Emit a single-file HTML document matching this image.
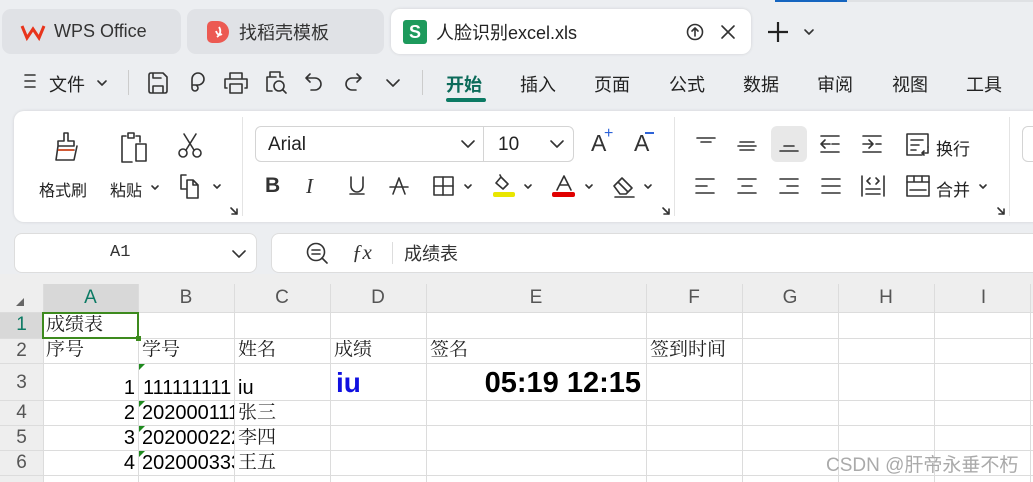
<!DOCTYPE html>
<html><head><meta charset="utf-8">
<style>
*{margin:0;padding:0;box-sizing:border-box}
body{width:1033px;height:482px;overflow:hidden;background:#eceef1;font-family:"Liberation Sans","Noto Sans CJK SC",sans-serif;color:#222;position:relative}
.a{position:absolute}
.tab{position:absolute;top:9px;height:45px;border-radius:9px;background:#e0e2e6;font-size:18px;display:flex;align-items:center}
.menu{position:absolute;top:71px;font-size:18px;color:#222}
svg{position:absolute;overflow:visible}
.ic{fill:none;stroke:#333;stroke-width:1.6;stroke-linecap:round;stroke-linejoin:round}
.lbl{position:absolute;font-size:16px;color:#222}
.cell{position:absolute;font-family:"Liberation Serif","Noto Serif CJK SC",serif;font-size:19px;line-height:20px;color:#222;white-space:nowrap;overflow:hidden}
.num{font-family:"Liberation Sans",sans-serif;font-size:20px;line-height:22px;color:#000}
.hd{position:absolute;top:284px;height:28px;font-size:19px;color:#555;text-align:center;line-height:28px;background:#eeeeee}
.rh{position:absolute;left:0;width:43px;font-size:19px;color:#555;text-align:center;background:#eeeeee}
.tri{position:absolute;width:0;height:0;border-top:6px solid #1e8a1e;border-right:6px solid transparent}
</style></head><body>
<div class="a" style="left:775px;top:0;width:72px;height:2px;background:#1565c0"></div>
<div class="a" style="left:847px;top:0;width:186px;height:2px;background:#dfe1e4"></div>

<div class="tab" style="left:2px;width:179px">
<svg width="24" height="16" style="left:19px;top:15px" viewBox="0 0 24 16"><path d="M1 2 L6 14 L12 5 L18 14 L23 2" fill="none" stroke="#e8341c" stroke-width="3" stroke-linejoin="miter"/></svg>
<span style="position:absolute;left:52px;color:#333">WPS Office</span></div>
<div class="tab" style="left:187px;width:197px">
<div class="a" style="left:20px;top:12px;width:22px;height:22px;border-radius:5px 11px 11px 5px;background:#ec5a52"></div>
<svg width="10" height="12" style="left:27px;top:17px" viewBox="0 0 10 12"><path d="M5 1 C7 4 7 8 3 11 M2 5 C3 8 5 10 8 8" fill="none" stroke="#fff" stroke-width="1.8"/></svg>
<span style="position:absolute;left:52px;color:#333">找稻壳模板</span></div>
<div class="tab" style="left:391px;width:360px;background:#fff;box-shadow:0 0 3px rgba(0,0,0,.12)">
<div class="a" style="left:12px;top:11px;width:24px;height:24px;border-radius:3px;background:#1d9a5c;color:#fff;font-weight:bold;font-size:18px;text-align:center;line-height:24px">S</div>
<span style="position:absolute;left:45px;color:#222">人脸识别excel.xls</span>
<svg width="18" height="18" style="left:295px;top:14px" viewBox="0 0 18 18"><circle cx="9" cy="9" r="7.5" class="ic" stroke="#888"/><path d="M9 13V5M6 8l3-3 3 3" class="ic" stroke="#888"/></svg>
<svg width="14" height="14" style="left:330px;top:16px" viewBox="0 0 14 14"><path d="M1 1L13 13M13 1L1 13" class="ic" stroke="#888"/></svg>
</div>
<svg width="22" height="22" style="left:767px;top:21px" viewBox="0 0 22 22"><path d="M11 1V21M1 11H21" stroke="#222" stroke-width="2.2"/></svg>
<svg width="10" height="6" style="left:804px;top:29px" viewBox="0 0 10 6"><path d="M1 1L5 5 9 1" class="ic"/></svg>

<svg width="12" height="14" style="left:24px;top:74px" viewBox="0 0 12 14"><path d="M1 1H11M1 7H11M1 13H11" class="ic"/></svg>
<div class="menu" style="left:49px">文件</div>
<svg width="10" height="6" style="left:97px;top:80px" viewBox="0 0 10 6"><path d="M1 1L5 5 9 1" class="ic"/></svg>
<div class="a" style="left:128px;top:70px;width:1px;height:25px;background:#ccc"></div>
<svg width="22" height="22" style="left:147px;top:72px" viewBox="0 0 22 22"><path d="M2 3Q2 1 4 1H16L20 5V19Q20 21 18 21H4Q2 21 2 19Z M6 21V14H16V21 M6 1V6H14" class="ic"/></svg>
<svg width="20" height="22" style="left:187px;top:72px" viewBox="0 0 20 22"><path d="M6 13H11A6 6 0 1 0 5 7V16A3 3 0 1 0 8 13" class="ic"/></svg>
<svg width="24" height="22" style="left:224px;top:72px" viewBox="0 0 24 22"><path d="M6 6V1H18V6 M3 16H1V7H23V16H21 M6 12H18V21H6Z" class="ic"/></svg>
<svg width="24" height="24" style="left:264px;top:71px" viewBox="0 0 24 24"><path d="M8 20H3V6H6V1H16V6H19 M3 6H12" class="ic"/><circle cx="15" cy="15" r="5" class="ic"/><path d="M19 19L22 22" class="ic"/></svg>
<svg width="18" height="20" style="left:305px;top:73px" viewBox="0 0 18 20"><path d="M5 1L1 5 5 9 M1 5H10A6 6 0 0 1 10 17H6" class="ic" stroke="#bbb"/></svg>
<svg width="18" height="20" style="left:344px;top:73px" viewBox="0 0 18 20"><path d="M13 1L17 5 13 9 M17 5H8A6 6 0 0 0 8 17H12" class="ic" stroke="#ccc"/></svg>
<svg width="14" height="8" style="left:386px;top:79px" viewBox="0 0 14 8"><path d="M1 1L7 7 13 1" class="ic"/></svg>
<div class="a" style="left:422px;top:70px;width:1px;height:25px;background:#ccc"></div>
<div class="menu" style="left:446px;font-weight:bold;color:#0c6b5a">开始</div>
<div class="a" style="left:446px;top:98px;width:40px;height:4px;border-radius:2px;background:#0c7a64"></div>
<div class="menu" style="left:520px">插入</div>
<div class="menu" style="left:594px">页面</div>
<div class="menu" style="left:669px">公式</div>
<div class="menu" style="left:743px">数据</div>
<div class="menu" style="left:817px">审阅</div>
<div class="menu" style="left:892px">视图</div>
<div class="menu" style="left:966px">工具</div>

<div class="a" style="left:14px;top:111px;width:1030px;height:111px;background:#fff;border-radius:10px;box-shadow:0 0 3px rgba(0,0,0,.12)"></div>
<svg width="30" height="30" style="left:52px;top:132px" viewBox="0 0 30 30"><path d="M12 1H16V9H22V14H6V9H12Z M6 14L4 28H22L25 14 M6 18H22" class="ic"/><path d="M6 18H22" stroke="#e04a1e" stroke-width="1.6"/></svg>
<div class="lbl" style="left:39px;top:177px">格式刷</div>
<svg width="32" height="32" style="left:120px;top:132px" viewBox="0 0 32 32"><path d="M6 4H2V30H12 M8 1H14V6H8Z M16 4H20V10" class="ic"/><rect x="16" y="12" width="10" height="17" class="ic" stroke="#2d63d8"/></svg>
<div class="lbl" style="left:110px;top:177px">粘贴</div>
<svg width="8" height="5" style="left:151px;top:185px" viewBox="0 0 8 5"><path d="M1 1L4 4 7 1" class="ic" stroke-width="2"/></svg>
<svg width="26" height="26" style="left:177px;top:133px" viewBox="0 0 26 26"><path d="M7 1L17 17 M19 1L9 17" class="ic"/><circle cx="6" cy="20" r="4" class="ic" stroke="#2d63d8"/><circle cx="20" cy="20" r="4" class="ic" stroke="#2d63d8"/></svg>
<svg width="26" height="26" style="left:180px;top:174px" viewBox="0 0 26 26"><path d="M6 1H1V15H6" class="ic" stroke="#2d63d8"/><path d="M7 6H13L18 11V24H7Z M13 6V11H18" class="ic"/></svg>
<svg width="8" height="5" style="left:213px;top:184px" viewBox="0 0 8 5"><path d="M1 1L4 4 7 1" class="ic" stroke-width="2"/></svg>
<svg width="8" height="8" style="left:230px;top:207px" viewBox="0 0 8 8"><path d="M1 1L7 7M7 2V7H2" class="ic" stroke="#888" stroke-width="1.2"/></svg>
<div class="a" style="left:242px;top:117px;width:1px;height:99px;background:#e4e4e4"></div>

<div class="a" style="left:255px;top:126px;width:319px;height:36px;border:1px solid #d4d4d4;border-radius:6px"></div>
<div class="a" style="left:483px;top:127px;width:1px;height:34px;background:#d4d4d4"></div>
<div class="a" style="left:268px;top:134px;font-size:19px">Arial</div>
<svg width="14" height="8" style="left:461px;top:140px" viewBox="0 0 14 8"><path d="M1 1L7 7 13 1" class="ic" stroke="#777"/></svg>
<div class="a" style="left:498px;top:134px;font-size:19px">10</div>
<svg width="14" height="8" style="left:550px;top:140px" viewBox="0 0 14 8"><path d="M1 1L7 7 13 1" class="ic" stroke="#777"/></svg>
<div class="a" style="left:591px;top:130px;font-size:23px;color:#333">A</div>
<div class="a" style="left:604px;top:125px;font-size:16px;color:#2d63d8">+</div>
<div class="a" style="left:634px;top:130px;font-size:23px;color:#333">A</div>
<div class="a" style="left:645px;top:132px;width:9px;height:2px;background:#2d63d8"></div>
<div class="a" style="left:265px;top:174px;font-size:21px;font-weight:bold;color:#333">B</div>
<div class="a" style="left:306px;top:174px;font-size:21px;font-style:italic;color:#333;font-family:'Liberation Serif',serif">I</div>
<svg width="16" height="20" style="left:349px;top:176px" viewBox="0 0 16 20"><path d="M2 1V10A6 6 0 0 0 14 10V1 M1 18H15" class="ic"/></svg>
<svg width="20" height="20" style="left:389px;top:176px" viewBox="0 0 20 20"><path d="M4 18L10 2 16 18 M1 11H19" class="ic"/></svg>
<svg width="22" height="20" style="left:433px;top:176px" viewBox="0 0 22 20"><rect x="1" y="1" width="19" height="18" class="ic"/><path d="M10 1V19M1 10H20" class="ic"/></svg>
<svg width="8" height="5" style="left:464px;top:184px" viewBox="0 0 8 5"><path d="M1 1L4 4 7 1" class="ic" stroke-width="2"/></svg>
<svg width="24" height="20" style="left:492px;top:174px" viewBox="0 0 24 20"><path d="M4 9L9 3 16 10 11 15Z M9 3L8 1" class="ic"/></svg>
<div class="a" style="left:493px;top:192px;width:22px;height:5px;border-radius:2px;background:#e9e600"></div>
<svg width="8" height="5" style="left:524px;top:184px" viewBox="0 0 8 5"><path d="M1 1L4 4 7 1" class="ic" stroke-width="2"/></svg>
<svg width="18" height="16" style="left:555px;top:175px" viewBox="0 0 18 16"><path d="M2 15L9 1 16 15 M5 10H13" class="ic"/></svg>
<div class="a" style="left:552px;top:192px;width:23px;height:5px;border-radius:2px;background:#e00000"></div>
<svg width="8" height="5" style="left:585px;top:184px" viewBox="0 0 8 5"><path d="M1 1L4 4 7 1" class="ic" stroke-width="2"/></svg>
<svg width="26" height="22" style="left:612px;top:176px" viewBox="0 0 26 22"><path d="M2 10L10 2 20 12 14 18H8Z M6 6L16 16 M3 21H22" class="ic"/></svg>
<svg width="8" height="5" style="left:644px;top:184px" viewBox="0 0 8 5"><path d="M1 1L4 4 7 1" class="ic" stroke-width="2"/></svg>
<svg width="8" height="8" style="left:662px;top:207px" viewBox="0 0 8 8"><path d="M1 1L7 7M7 2V7H2" class="ic" stroke="#888" stroke-width="1.2"/></svg>
<div class="a" style="left:674px;top:117px;width:1px;height:99px;background:#e4e4e4"></div>

<svg width="20" height="14" style="left:696px;top:137px" viewBox="0 0 20 14"><path d="M1 1H19M5 5H15" class="ic"/></svg>
<svg width="20" height="14" style="left:737px;top:139px" viewBox="0 0 20 14"><path d="M3 3H17M1 7H19M3 11H17" class="ic" stroke-width="1.4"/></svg>
<div class="a" style="left:771px;top:126px;width:36px;height:36px;border-radius:6px;background:#e8e8e8"></div>
<svg width="20" height="14" style="left:779px;top:141px" viewBox="0 0 20 14"><path d="M5 5H15M1 10H19" class="ic"/></svg>
<svg width="20" height="18" style="left:820px;top:135px" viewBox="0 0 20 18"><path d="M1 1H19M1 17H19M12 9H19" class="ic"/><path d="M10 9H1M5 5L1 9 5 13" class="ic" stroke="#2d63d8"/></svg>
<svg width="20" height="18" style="left:862px;top:135px" viewBox="0 0 20 18"><path d="M1 1H19M1 17H19M14 9H19" class="ic"/><path d="M1 9H11M7 5L11 9 7 13" class="ic" stroke="#2d63d8"/></svg>
<svg width="24" height="24" style="left:906px;top:133px" viewBox="0 0 24 24"><path d="M16 22H1V1H22V14 M5 7H17M5 12H13M5 17H10" class="ic"/><path d="M22 14V20H16M18 18L16 20 18 22" class="ic" stroke="#1d9a5c"/></svg>
<div class="lbl" style="left:936px;top:135px;font-size:17px">换行</div>
<svg width="20" height="16" style="left:695px;top:178px" viewBox="0 0 20 16"><path d="M1 1H19M1 8H12M1 15H19" class="ic"/></svg>
<svg width="20" height="16" style="left:737px;top:178px" viewBox="0 0 20 16"><path d="M1 1H19M5 8H15M1 15H19" class="ic"/></svg>
<svg width="20" height="16" style="left:779px;top:178px" viewBox="0 0 20 16"><path d="M1 1H19M8 8H19M1 15H19" class="ic"/></svg>
<svg width="20" height="16" style="left:821px;top:178px" viewBox="0 0 20 16"><path d="M1 1H19M1 8H19M1 15H19" class="ic"/></svg>
<svg width="24" height="22" style="left:861px;top:175px" viewBox="0 0 24 22"><path d="M1 1V21M23 1V21M5 14H19M5 19H19" class="ic"/><path d="M9 3L6 6 9 9M15 3L18 6 15 9" class="ic" stroke="#2d63d8"/></svg>
<svg width="24" height="22" style="left:906px;top:175px" viewBox="0 0 24 22"><rect x="1" y="1" width="22" height="20" class="ic"/><path d="M8 1V7M16 1V7M1 7H23" class="ic"/><path d="M4 15H20" class="ic" stroke="#1d9a5c"/></svg>
<div class="lbl" style="left:936px;top:176px;font-size:17px">合并</div>
<svg width="8" height="5" style="left:979px;top:184px" viewBox="0 0 8 5"><path d="M1 1L4 4 7 1" class="ic" stroke-width="2"/></svg>
<svg width="8" height="8" style="left:997px;top:207px" viewBox="0 0 8 8"><path d="M1 1L7 7M7 2V7H2" class="ic" stroke="#888" stroke-width="1.2"/></svg>
<div class="a" style="left:1009px;top:117px;width:1px;height:99px;background:#e4e4e4"></div>
<div class="a" style="left:1022px;top:126px;width:30px;height:36px;border:1px solid #d4d4d4;border-radius:6px"></div>

<div class="a" style="left:14px;top:233px;width:243px;height:40px;background:#fff;border:1px solid #ddd;border-radius:8px"></div>
<div class="a" style="left:110px;top:243px;font-family:'Liberation Mono','DejaVu Sans Mono',monospace;font-size:17px;color:#333">A1</div>
<svg width="14" height="8" style="left:232px;top:250px" viewBox="0 0 14 8"><path d="M1 1L7 7 13 1" class="ic" stroke="#666"/></svg>
<div class="a" style="left:271px;top:233px;width:780px;height:40px;background:#fff;border:1px solid #ddd;border-radius:8px"></div>
<svg width="22" height="22" style="left:306px;top:242px" viewBox="0 0 22 22"><circle cx="10" cy="10" r="8.5" class="ic"/><path d="M6 8H14M6 12H14M16 16L21 21" class="ic"/></svg>
<div class="a" style="left:352px;top:240px;font-family:'Liberation Serif',serif;font-style:italic;font-size:21px;color:#333">ƒx</div>
<div class="a" style="left:392px;top:242px;width:1px;height:22px;background:#ddd"></div>
<div class="a" style="left:404px;top:240px;font-size:18px;color:#333">成绩表</div>

<div class="a" style="left:0;top:274px;width:1033px;height:208px;background:#fff"></div>
<div class="a" style="left:0;top:274px;width:1033px;height:10px;background:#eeeeee"></div>
<div class="a" style="left:0;top:284px;width:1033px;height:28px;background:#eeeeee"></div>
<div class="a" style="left:0;top:284px;width:43px;height:198px;background:#eeeeee"></div>
<svg width="8" height="8" style="left:16px;top:298px" viewBox="0 0 8 8"><path d="M8 0V8H0Z" fill="#666"/></svg>
<div class="hd" style="left:43px;width:95px;background:#d8d8d8;color:#0c7a64">A</div>
<div class="hd" style="left:138px;width:96px">B</div>
<div class="hd" style="left:234px;width:96px">C</div>
<div class="hd" style="left:330px;width:96px">D</div>
<div class="hd" style="left:426px;width:220px">E</div>
<div class="hd" style="left:646px;width:96px">F</div>
<div class="hd" style="left:742px;width:96px">G</div>
<div class="hd" style="left:838px;width:96px">H</div>
<div class="hd" style="left:934px;width:99px">I</div>
<div class="rh" style="top:312px;height:26px;line-height:26px;background:#d8d8d8;color:#0c7a64">1</div>
<div class="rh" style="top:338px;height:25px;line-height:25px">2</div>
<div class="rh" style="top:363px;height:37px;line-height:40px">3</div>
<div class="rh" style="top:400px;height:25px;line-height:25px">4</div>
<div class="rh" style="top:425px;height:25px;line-height:25px">5</div>
<div class="rh" style="top:450px;height:25px;line-height:25px">6</div>
<svg width="1033" height="482" style="left:0;top:0" viewBox="0 0 1033 482">
<g stroke="#dcdcdc" stroke-width="1">
<path d="M138.5 284V482M234.5 284V482M330.5 284V482M426.5 284V482M646.5 284V482M742.5 284V482M838.5 284V482M934.5 284V482M1030.5 284V482"/>
<path d="M0 312.5H1033M0 338.5H1033M0 363.5H1033M0 400.5H1033M0 425.5H1033M0 450.5H1033M0 475.5H1033"/>
<path d="M43.5 284V482"/>
</g></svg>
<div class="a" style="left:42px;top:312px;width:97px;height:27px;border:2px solid #3d8a1e"></div>
<div class="a" style="left:136px;top:336px;width:5px;height:5px;background:#3d8a1e"></div>
<div class="cell" style="left:46px;top:315px">成绩表</div>
<div class="cell" style="left:46px;top:340px">序号</div>
<div class="cell" style="left:142px;top:340px">学号</div>
<div class="cell" style="left:238px;top:340px">姓名</div>
<div class="cell" style="left:334px;top:340px">成绩</div>
<div class="cell" style="left:430px;top:340px">签名</div>
<div class="cell" style="left:650px;top:340px">签到时间</div>
<div class="cell num" style="left:43px;top:377px;width:92px;text-align:right">1</div>
<div class="cell num" style="left:43px;top:402px;width:92px;text-align:right">2</div>
<div class="cell num" style="left:43px;top:427px;width:92px;text-align:right">3</div>
<div class="cell num" style="left:43px;top:452px;width:92px;text-align:right">4</div>
<div class="cell num" style="left:143px;top:377px;width:91px">111111111</div>
<div class="cell num" style="left:142px;top:402px;width:92px">202000111</div>
<div class="cell num" style="left:142px;top:427px;width:92px">202000222</div>
<div class="cell num" style="left:142px;top:452px;width:92px">202000333</div>
<div class="tri" style="left:139px;top:364px"></div>
<div class="tri" style="left:139px;top:401px"></div>
<div class="tri" style="left:139px;top:426px"></div>
<div class="tri" style="left:139px;top:451px"></div>
<div class="cell num" style="left:238px;top:377px">iu</div>
<div class="cell" style="left:238px;top:403px">张三</div>
<div class="cell" style="left:238px;top:428px">李四</div>
<div class="cell" style="left:238px;top:453px">王五</div>
<div class="cell" style="left:336px;top:368px;line-height:30px;font-family:'Liberation Sans',sans-serif;font-weight:bold;font-size:28px;color:#1010e0">iu</div>
<div class="cell" style="left:426px;top:367px;width:215px;line-height:32px;text-align:right;font-family:'Liberation Sans',sans-serif;font-weight:bold;font-size:29px;color:#000">05:19 12:15</div>
<div class="a" style="left:826px;top:450px;font-size:19px;color:#aaa">CSDN @肝帝永垂不朽</div>
</body></html>
